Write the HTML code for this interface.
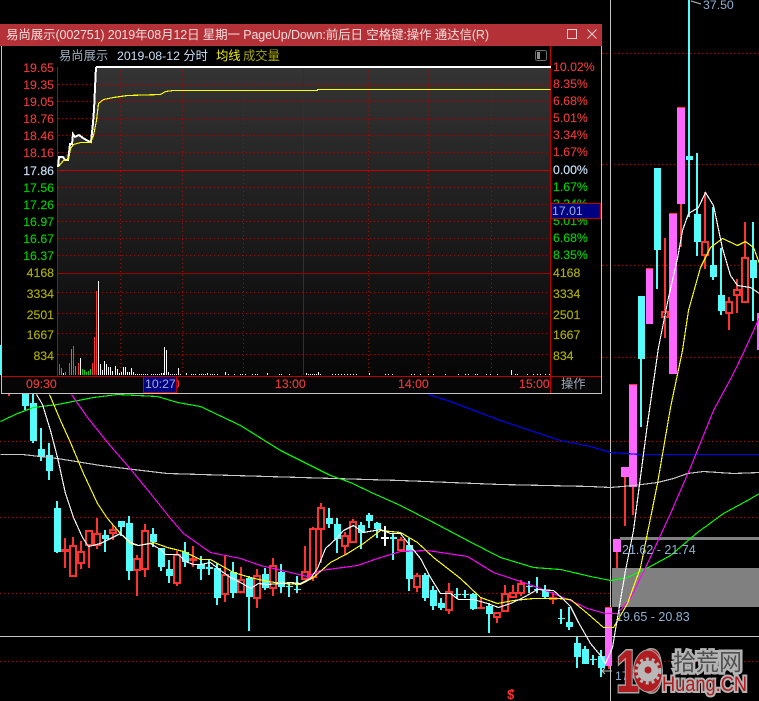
<!DOCTYPE html>
<html><head><meta charset="utf-8"><title>易尚展示</title>
<style>
html,body{margin:0;padding:0;background:#000;width:759px;height:701px;overflow:hidden}
svg{display:block;position:absolute;left:0;top:0}
text{font-family:"Liberation Sans","Noto Sans CJK SC",sans-serif;font-size:12.3px}
.c{shape-rendering:crispEdges}
.r{fill:#e83a3a;stroke:#e83a3a;stroke-width:.15}.g{fill:#00d000;stroke:#00d000;stroke-width:.15}.w{fill:#c8e0f8;stroke:#c8e0f8;stroke-width:.15}.v{fill:#b0b000;stroke:#b0b000;stroke-width:.15}
</style></head><body>
<svg width="759" height="701" viewBox="0 0 759 701" xmlns="http://www.w3.org/2000/svg">
<defs><linearGradient id="bg" x1="0" y1="0" x2="0" y2="1"><stop offset="0" stop-color="#343434"/><stop offset="1" stop-color="#060606"/></linearGradient></defs>
<rect width="759" height="701" fill="#000"/>
<!-- background grid -->
<g class="c" stroke="#b00000" stroke-width="1" stroke-dasharray="1 3" fill="none">
<path d="M602 53.5H759M602 164.5H759M602 265.5H759M602 357.5H759M0 441.5H759M0 517.5H759M0 593.5H759M0 661.5H759"/>
</g>
<path class="c" d="M0 636.5H759M610.5 0V701" stroke="#c4c4c4" stroke-width="1" fill="none"/>
<!-- candles -->
<g class="c">
<path fill="none" stroke="#54fcfc" stroke-width="2" d="M25 394V410M33 394V443M41 428V461M49 443V480M57 501V553M105 530V552M121 521V536M129 516V580M153 528V547M161 548V571M169 560V583M185 542V567M201 556V580M209 560V575M217 563V605M233 562V598M249 576V631M265 568V590M281 564V593M289 582V597M297 576V593M329 508V528M337 518V553M361 522V549M369 513V528M377 522V538M393 534V560M409 538V591M425 573V601M433 586V610M441 598V610M457 588V599M465 590V598M473 593V610M489 603V633M529 581V593M537 577V593M545 585V599M561 609V624M569 607V630M577 637V668M585 646V664M593 655V665M601 650V677M641 296V427M657 168V289M689 0V217M697 153V256M713 207V280M721 248V315M753 222V321M0 345V375"/>
<path fill="#54fcfc" d="M22 394h7v12h-7zM30 403h7v38h-7zM38 449h7v8h-7zM46 455h7v16h-7zM54 508h7v44h-7zM102 535h7v4h-7zM118 521h7v6h-7zM126 523h7v48h-7zM150 534h7v8h-7zM158 548h7v19h-7zM166 569h7v7h-7zM182 552h7v10h-7zM197 564h8v5h-8zM206 567h7v2h-7zM214 568h7v30h-7zM230 572h7v21h-7zM246 578h7v19h-7zM262 574h7v14h-7zM278 572h7v15h-7zM286 586h7v1h-7zM294 589h7v1h-7zM326 518h7v6h-7zM334 524h7v15h-7zM358 525h7v8h-7zM366 515h7v6h-7zM374 523h7v6h-7zM390 537h7v2h-7zM406 545h7v34h-7zM422 575h7v23h-7zM430 590h7v16h-7zM438 603h7v5h-7zM454 594h7v1h-7zM462 594h7v1h-7zM470 594h7v15h-7zM486 606h7v8h-7zM526 586h7v1h-7zM534 589h7v1h-7zM542 590h7v7h-7zM558 618h7v1h-7zM566 622h7v5h-7zM574 643h7v14h-7zM582 649h7v15h-7zM590 659h7v1h-7zM598 656h7v12h-7zM638 296h7v63h-7zM654 168h7v82h-7zM686 156h7v4h-7zM694 214h7v28h-7zM710 265h7v12h-7zM718 295h7v16h-7zM750 260h7v18h-7z"/>
<path fill="none" stroke="#ff3232" stroke-width="2" d="M65 538V568M73 537V577M81 541V569M89 530V568M97 518V549M113 525V540M137 555V596M145 524V577M177 551V586M193 546V567M225 555V602M241 567V593M257 569V608M273 558V596M305 546V580M313 527V581M321 503V563M345 532V555M353 519V543M401 537V551M417 573V592M449 583V614M481 597V609M497 612V623M505 585V612M513 585V598M521 580V596M553 592V604M665 238V338M705 192V269M729 297V330M737 279V313M745 222V303M609 666V669M617 552V568M625 477V526M633 487V515M681 204V247M9 394V396"/>
<path fill="#000" stroke="#ff3232" stroke-width="2" d="M70 546h6v30h-6zM78 552h6v11h-6zM86 531h6v14h-6zM94 534h6v11h-6zM110 530h6v3h-6zM134 559h6v11h-6zM142 531h6v38h-6zM174 555h6v28h-6zM222 575h6v19h-6zM238 580h6v12h-6zM254 576h6v22h-6zM270 566h6v22h-6zM302 572h6v7h-6zM310 529h6v48h-6zM318 508h6v21h-6zM342 536h6v10h-6zM350 522h6v20h-6zM398 540h6v10h-6zM414 576h6v11h-6zM446 592h6v18h-6zM494 613h6v4h-6zM502 594h6v17h-6zM510 593h6v4h-6zM518 584h6v9h-6zM662 312h6v5h-6zM702 242h6v13h-6zM726 302h6v11h-6zM734 290h6v5h-6zM742 258h6v44h-6z"/>
<path fill="#ff3232" d="M61 549h8v3h-8zM189 558h8v3h-8zM477 607h8v2h-8zM549 597h8v3h-8z"/>
<path fill="#fff" d="M384 526h2v20h-2zM381 537h8v2h-8z"/>
<path fill="#ff66ff" d="M605 607h7v59h-7zM613 539h8v13h-8zM621 467h8v10h-8zM629 384h8v103h-8zM646 268h7v56h-7zM669 213h8v161h-8zM677 107h8v97h-8zM757 313h2v37h-2z"/>
<path fill="#ff3232" d="M605 607h7v1h-7zM629 384h8v1h-8zM646 268h7v1h-7zM669 213h8v1h-8zM677 107h8v1h-8z"/>
<path fill="#808080" d="M620 537h139v3h-139zM612 568h147v39h-147z"/>
</g>
<!-- moving averages -->
<g fill="none" stroke-width="1.15" class="c" transform="translate(.5 .5)">
<polyline stroke="#0000ff" points="428,394 447,400 500,420 560,440 590,446 610,452 640,454 690,454 723,454 759,454"/>
<polyline stroke="#c8c8c8" points="0,454 22,454 57,458 100,465 133,469 167,473 200,474 300,477 400,480 500,484 590,486 610,487 633,485 657,482 673,478 687,473 703,471 733,473 759,472"/>
<polyline stroke="#00ff00" points="0,421 17,413 33,407 57,404 93,397 117,394 157,396 177,402 200,406 240,425 280,450 330,475 350,482 373,493 400,505 433,522 467,540 500,557 533,567 560,569 590,576 610,580 627,577 648,567 670,555 697,532 723,513 747,500 759,493"/>
<polyline stroke="#ff00ff" points="71,394 87,417 107,442 127,465 150,493 170,518 183,533 200,545 210,552 240,558 260,565 290,572 307,576 320,570 357,565 377,558 400,551 427,550 467,556 493,572 517,580 540,588 570,600 587,608 605,613 617,613 630,598 647,563 670,513 690,467 713,410 733,373 744,350 759,317"/>
<polyline stroke="#ffff00" points="49,394 60,420 70,442 83,473 97,503 107,518 120,533 130,543 138,545 153,542 167,547 183,551 200,559 210,559 233,572 250,577 267,581 283,583 300,584 313,577 330,562 347,553 363,543 380,530 400,532 417,542 433,557 460,578 480,597 497,603 513,600 533,598 557,598 570,599 587,613 603,627 613,627 627,603 640,567 657,483 670,407 682,350 688,310 700,267 710,247 722,238 737,245 745,241 753,247 759,263"/>
<polyline stroke="#ffffff" points="36,394 42,404 50,430 57,457 65,493 73,517 82,537 88,546 100,543 110,538 120,533 130,542 138,545 150,543 160,549 165,554 178,554 185,561 193,564 200,564 210,562 220,570 230,577 240,582 250,588 258,583 267,584 280,583 290,582 300,583 310,578 317,568 325,548 337,537 343,530 353,525 363,532 380,529 390,533 400,533 407,542 420,558 430,577 440,593 450,593 458,599 473,599 487,603 498,607 510,603 523,597 537,589 553,590 562,598 570,606 578,622 590,643 600,655 605,663 612,647 625,570 633,530 647,423 658,347 668,297 677,258 682,230 688,213 698,207 705,192 713,205 722,248 730,275 737,285 750,287 759,293"/>
</g>
<text x="622" y="554" fill="#8fb0d0" style="font-size:12.5px">21.62 - 21.74</text>
<text x="616" y="621" fill="#8fb0d0" style="font-size:12.5px">19.65 - 20.83</text>
<text x="703" y="9" fill="#8fb0d0">37.50</text>
<path d="M691 1l10 3" stroke="#c0c0c0" fill="none"/>
<path d="M602 671H612M602 671l3-3M602 671l3 3" stroke="#c0c0c0" fill="none"/>
<text x="615" y="680" fill="#8fb0d0">17.62</text>
<text x="507" y="699" fill="#ff3232" font-weight="bold" style="font-size:13px">$</text>
<path d="M509 691h6l-3-2z" fill="#ff3232"/>
<!-- watermark -->
<text x="616" y="692" font-weight="bold" textLength="47" lengthAdjust="spacingAndGlyphs" fill="#b01c20" stroke="#a8a8a8" stroke-width="3" paint-order="stroke" style="font-size:60px">10</text>
<ellipse cx="648" cy="671" rx="14.5" ry="21" fill="#b01c20" stroke="#a8a8a8" stroke-width="1"/>
<circle cx="648" cy="671" r="10.5" fill="#b8b8b8"/>
<circle cx="648" cy="671" r="12" fill="none" stroke="#b8b8b8" stroke-width="3" stroke-dasharray="3 3"/>
<circle cx="648" cy="670" r="3.5" fill="#b01c20"/>
<text x="673" y="670" fill="#505050" stroke="#b4b4b4" stroke-width="5" paint-order="stroke" style="font-size:23px">拾荒网</text>
<text x="662" y="691" fill="#b01c20" stroke="#b4b4b4" stroke-width="4" paint-order="stroke" textLength="85" lengthAdjust="spacingAndGlyphs" style="font-size:21px">Huang.CN</text>

<!-- window -->
<rect x="1" y="46" width="601" height="348" fill="#000"/>
<rect x="58" y="67" width="493" height="309" fill="url(#bg)"/>
<polygon points="58,66 97,66 96,67 95,88 94,110 93,123 91,142 88,141 83,138 79,134 75,137 72,133 72,143 69,144 68,153 63,157 58,157 57,167" fill="#000"/>
<rect x="2" y="377" width="598" height="16" fill="#060606"/>
<g class="c" fill="none">
<path stroke="#b00000" stroke-dasharray="1 3" d="M58 84.5H550M58 101.5H550M58 118.5H550M58 135.5H550M58 152.5H550M58 187.5H550M58 204.5H550M58 221.5H550M58 238.5H550M58 255.5H550M58 292.5H550M58 313.5H550M58 333.5H550M58 354.5H550M120.5 67V375M182.5 67V375M243.5 67V375M368.5 67V375M428.5 67V375M491.5 67V375"/>
<path stroke="#c00000" d="M58 170.5H550"/>
<path stroke="#a00000" d="M58 273.5H550M303.5 67V375"/>
<path stroke="#c00000" d="M57.5 67V376M1 376.5H601M550.5 46V393"/>
<path stroke="#c4c4c4" d="M1.5 46V393.5H601.5V46"/>
<path stroke="#ffffff" stroke-width="2" d="M96 67H551"/>
</g>
<!-- volume -->
<g class="c" fill="none" stroke-width="1.2">
<path stroke="#ff3232" d="M59.5 375V364M69.5 375V363M73.5 375V346M78.5 375V363M92.5 375V363M94.5 375V337M96.5 375V291"/>
<path stroke="#00d800" d="M61.5 375V368M65.5 375V372M71.5 375V349M75.5 375V366M82.5 375V369M84.5 375V370M86.5 375V372M88.5 375V371M90.5 375V369"/>
<path stroke="#fff" d="M63.5 375V373M80.5 375V358M98.5 375V281M100.5 375V364M102.5 375V370M104.5 375V361M106.5 375V364M108.5 375V367M110.5 375V367M112.5 375V371M115.5 375V366M117.5 375V369M119.5 375V373M121.5 375V372M123.5 375V367M125.5 375V367M127.5 375V372M129.5 375V372M131.5 375V368M133.5 375V372M135.5 375V374M137.5 375V374M139.5 375V374M141.5 375V374M143.5 375V374M145.5 375V374M147.5 375V374M151.5 375V374M153.5 375V374M155.5 375V374M157.5 375V374M159.5 375V374M161.5 375V373M163.5 375V373M164.5 375V347M166.5 375V350M168.5 375V372M170.5 375V374M172.5 375V374M174.5 375V374M176.5 375V374M178.5 375V368M180.5 375V374M186.5 375V373M191.5 375V374M193.5 375V374M195.5 375V374M199.5 375V374M201.5 375V374M203.5 375V374M205.5 375V374M207.5 375V373M210.5 375V374M212.5 375V374M214.5 375V374M217.5 375V374M225.5 375V372M228.5 375V374M234.5 375V374M240.5 375V374M242.5 375V374M245.5 375V374M252.5 375V374M255.5 375V374M257.5 375V374M267.5 375V373M279.5 375V374M281.5 375V374M289.5 375V374M306.5 375V373M308.5 375V374M310.5 375V374M312.5 375V374M314.5 375V374M316.5 375V374M318.5 375V372M320.5 375V374M332.5 375V374M335.5 375V374M338.5 375V374M341.5 375V374M344.5 375V374M347.5 375V374M350.5 375V374M353.5 375V374M356.5 375V374M369.5 375V373M385.5 375V374M388.5 375V374M392.5 375V374M411.5 375V374M414.5 375V374M420.5 375V374M428.5 375V374M433.5 375V374M445.5 375V374M458.5 375V374M465.5 375V374M468.5 375V374M475.5 375V374M477.5 375V374M486.5 375V374M490.5 375V374M497.5 375V374M511.5 375V370M515.5 375V374M517.5 375V374M527.5 375V374M533.5 375V374M537.5 375V374M540.5 375V374M545.5 375V374M549.5 375V374"/>
</g>
<!-- price lines -->
<polyline fill="none" stroke="#fff" stroke-width="2" class="c" points="58,167 59,157 63,157 65,160 68,160 69,153 70,144 72,144 73,134 75,137 79,135 83,138 88,141 91,142 93,123 94,110 95,88 96,67"/>
<polyline fill="none" stroke="#ffff00" stroke-width="1.15" class="c" transform="translate(.5 .5)" points="58,166 63,160 68,159 70,148 73,144 80,142 90,142 93,135 96,120 98,103 103,99 113,97 127,95 160,94 165,91 173,90 317,90 317,89 550,89"/>
<!-- axes labels -->
<g text-anchor="end">
<text x="54" y="72" class="r">19.65</text><text x="54" y="89" class="r">19.35</text><text x="54" y="106" class="r">19.05</text><text x="54" y="123" class="r">18.76</text><text x="54" y="140" class="r">18.46</text><text x="54" y="157" class="r">18.16</text>
<text x="54" y="175" class="w">17.86</text>
<text x="54" y="192" class="g">17.56</text><text x="54" y="209" class="g">17.26</text><text x="54" y="226" class="g">16.97</text><text x="54" y="243" class="g">16.67</text><text x="54" y="260" class="g">16.37</text>
<text x="54" y="277" class="v">4168</text><text x="54" y="298" class="v">3334</text><text x="54" y="319" class="v">2501</text><text x="54" y="339" class="v">1667</text><text x="54" y="360" class="v">834</text>
</g>
<text x="553" y="71" class="r">10.02%</text><text x="553" y="88" class="r">8.35%</text><text x="553" y="105" class="r">6.68%</text><text x="553" y="122" class="r">5.01%</text><text x="553" y="139" class="r">3.34%</text><text x="553" y="156" class="r">1.67%</text>
<text x="553" y="174" class="w">0.00%</text>
<text x="553" y="191" class="g">1.67%</text><text x="553" y="208" class="g">3.34%</text><text x="553" y="225" class="g">5.01%</text><text x="553" y="242" class="g">6.68%</text><text x="553" y="259" class="g">8.35%</text>
<text x="553" y="277" class="v">4168</text><text x="553" y="298" class="v">3334</text><text x="553" y="319" class="v">2501</text><text x="553" y="339" class="v">1667</text><text x="553" y="360" class="v">834</text>
<rect class="c" x="551.5" y="203.5" width="49" height="15" fill="#000080" stroke="#c00000"/>
<text x="552" y="215" fill="#a0b0d8">17.01</text>
<!-- time axis -->
<text x="26" y="388" class="r">09:30</text>
<text x="149" y="388" class="r">10:30</text>
<rect class="c" x="143.5" y="376.5" width="33" height="16" fill="#000080" stroke="#c00000"/>
<text x="145" y="388" fill="#a0b0d8">10:27</text>
<text x="275" y="388" class="r">13:00</text><text x="398" y="388" class="r">14:00</text><text x="519" y="388" class="r">15:00</text>
<text x="561" y="388" fill="#a0a8b8">操作</text>
<!-- header row -->
<text x="59" y="60" fill="#9fb0c0">易尚展示</text>
<text x="117" y="60" fill="#c8e0f8">2019-08-12 分时</text>
<text x="216" y="60" fill="#f0f000">均线</text>
<text x="243" y="60" fill="#a8a800">成交量</text>
<g class="c" fill="none" stroke="#707070"><rect x="535.5" y="50.5" width="11" height="10" rx="2"/></g>
<rect class="c" x="537" y="52" width="3" height="7" fill="#909090"/>
<!-- title bar -->
<rect class="c" x="0" y="24" width="602" height="22" fill="#b43237"/>
<text x="6" y="39" fill="#f4dcdc" textLength="483" lengthAdjust="spacing" style="font-size:12.5px">易尚展示(002751) 2019年08月12日 星期一 PageUp/Down:前后日 空格键:操作 通达信(R)</text>
<rect class="c" x="567.5" y="29.5" width="9" height="9" fill="none" stroke="#e8d0d0"/>
<path d="M587.5 29.5l9 9M596.5 29.5l-9 9" stroke="#e8d0d0" fill="none"/>
</svg>
</body></html>
